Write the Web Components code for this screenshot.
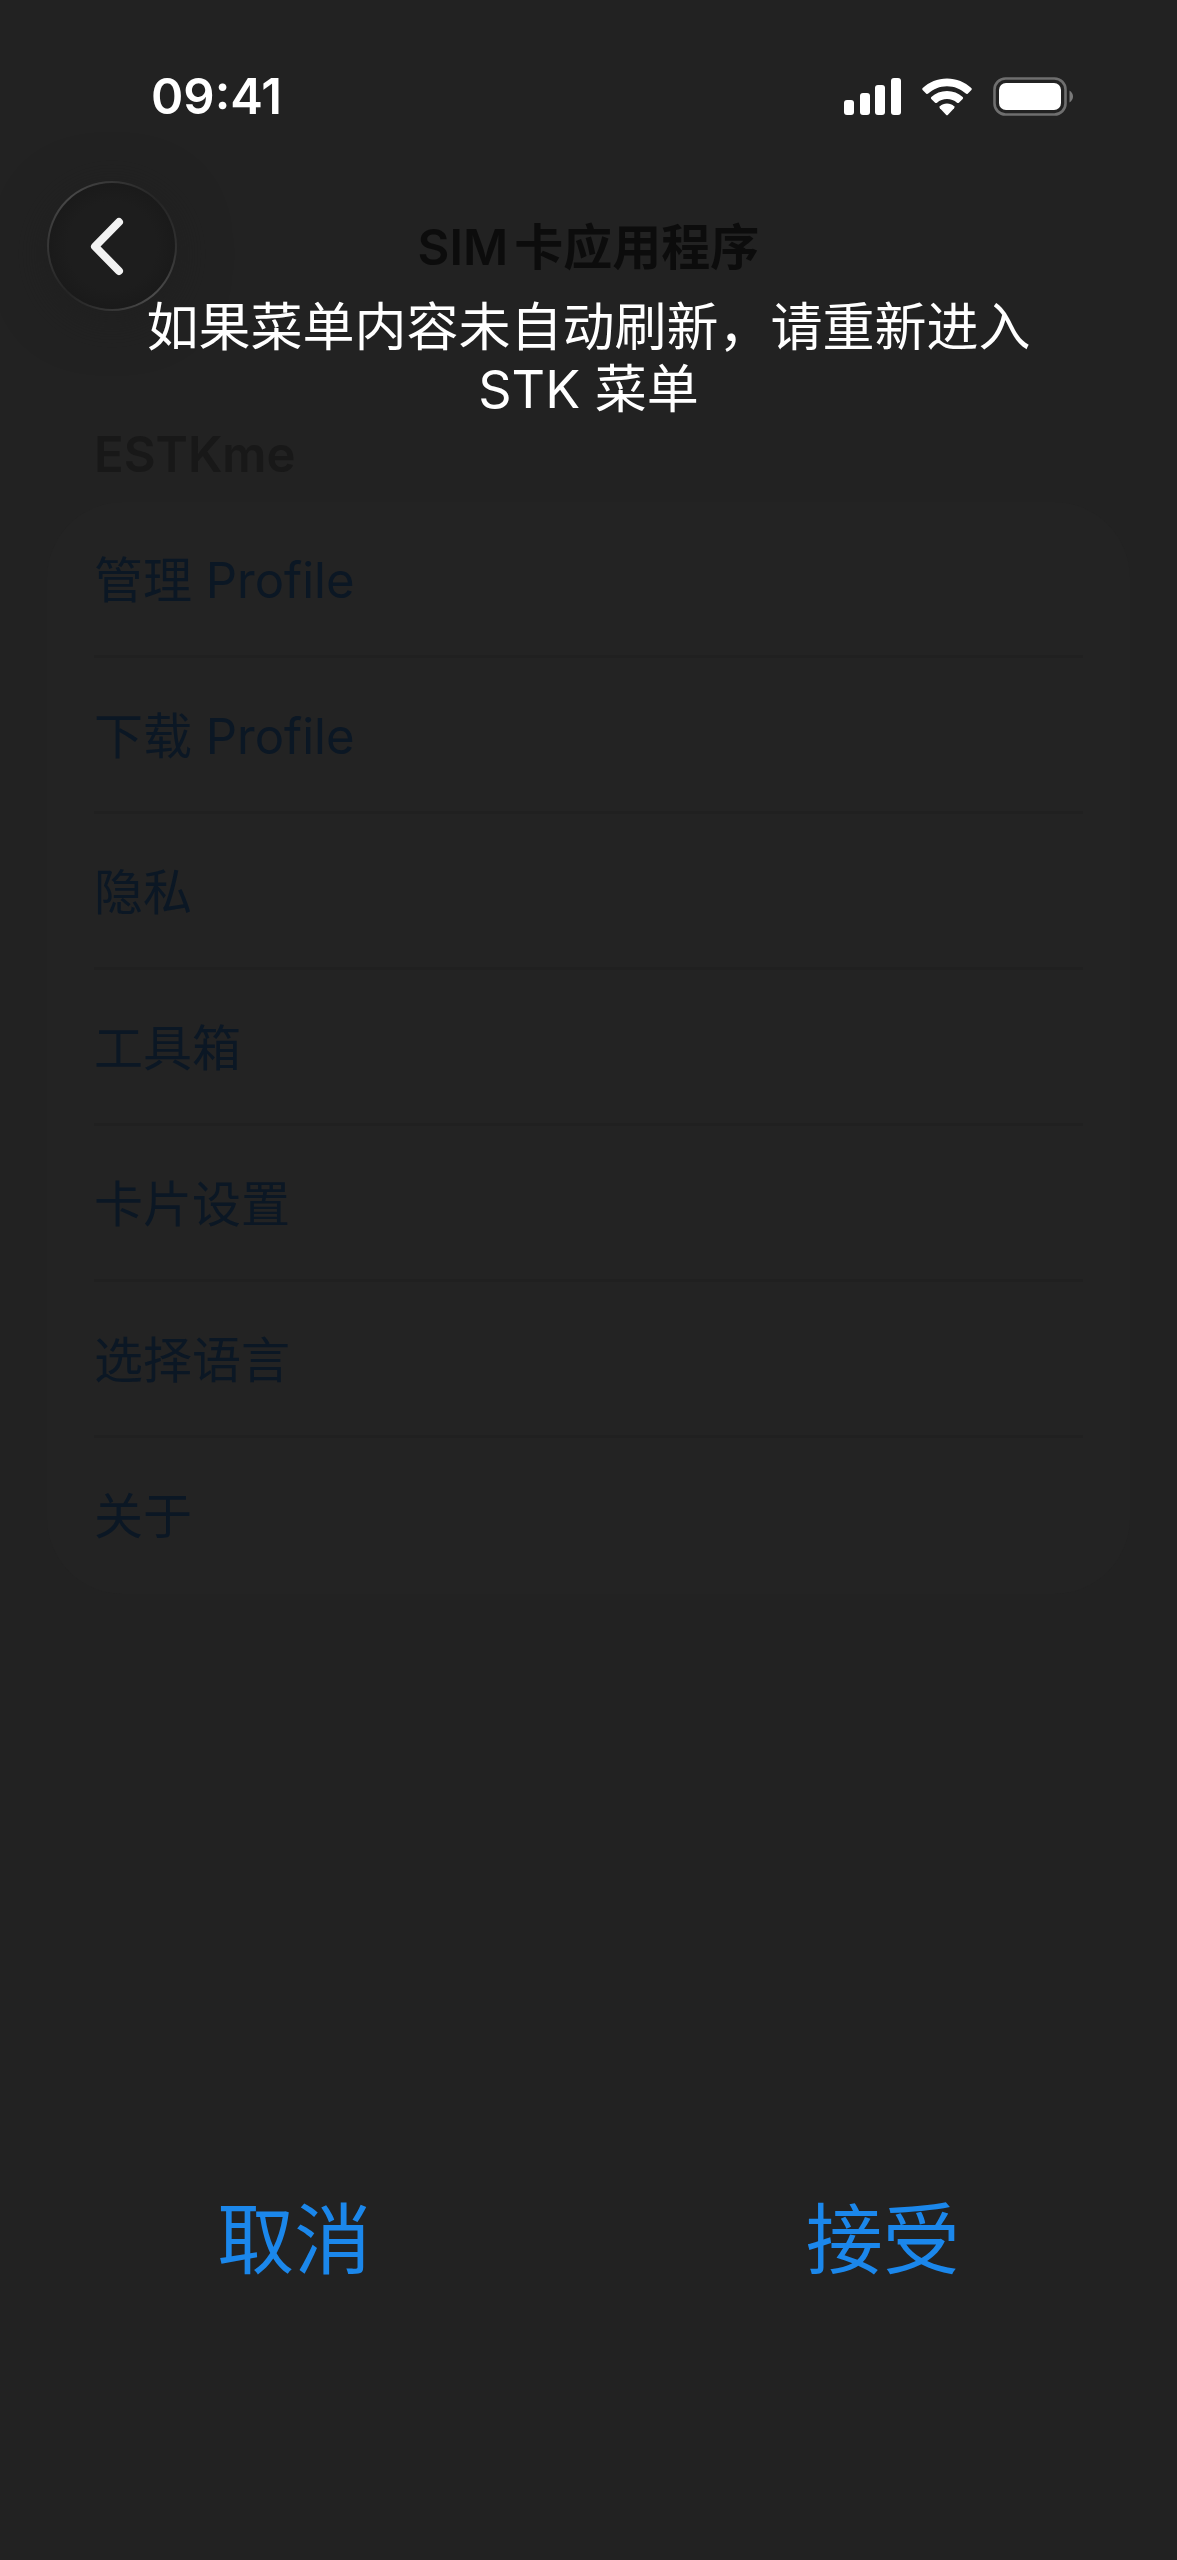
<!DOCTYPE html>
<html lang="zh-CN">
<head>
<meta charset="utf-8">
<meta name="viewport" content="width=device-width, initial-scale=1">
<title>SIM卡应用程序</title>
<style>
  html, body { margin: 0; min-height: 100%; background: #222; }
  body {
    font-family: Inter, "Noto Sans CJK SC", sans-serif;
    font-size: 49px;
    line-height: 60px;
    color: #fff;
  }
</style>
</head>
<body>
<stk-screen>
  <status-bar slot="status" time="09:41"></status-bar>
  <nav-bar slot="nav">SIM卡应用程序</nav-bar>
  <stk-menu slot="menu" heading="ESTKme">
    <stk-item>管理 Profile</stk-item>
    <stk-item>下载 Profile</stk-item>
    <stk-item>隐私</stk-item>
    <stk-item>工具箱</stk-item>
    <stk-item>卡片设置</stk-item>
    <stk-item>选择语言</stk-item>
    <stk-item>关于</stk-item>
  </stk-menu>
  <stk-prompt slot="prompt" cancel="取消" accept="接受">如果菜单内容未自动刷新，请重新进入 STK 菜单</stk-prompt>
</stk-screen>

<script>
class StkScreenElement extends HTMLElement {
  constructor() {
    super()
    this.attachShadow({mode: 'open'}).innerHTML = `
      <style>
      :host { display: grid; min-height: 100vh; }
      /* the prompt covers the page, so both share one cell */
      #page, slot[name="prompt"]::slotted(*) { grid-area: 1 / 1; }
      #page { display: flex; flex-direction: column; }
      </style>
      <div id="page">
        <slot name="status"></slot>
        <slot name="nav"></slot>
        <slot name="menu"></slot>
      </div>
      <slot name="prompt"></slot>
    `
  }
}

class StatusBarElement extends HTMLElement {
  connectedCallback() {
    if (this.shadowRoot) return
    this.attachShadow({mode: 'open'}).innerHTML = `
      <style>
      :host {
        display: flex;
        align-items: center;
        justify-content: space-between;
        padding: 67px 103px 54px 151px;
        font-weight: 600;
      }
      #icons { display: flex; align-items: center; gap: 20px; }
      svg { display: block; }
      </style>
      <time>${this.getAttribute('time')}</time>
      <div id="icons">
        <svg width="58" height="40" viewBox="0 0 58 40" fill="#fff" aria-hidden="true">
          <rect x="0" y="23" width="10" height="15" rx="3"/>
          <rect x="16" y="16" width="10" height="22" rx="3"/>
          <rect x="31" y="8" width="10" height="30" rx="3"/>
          <rect x="47" y="1" width="10" height="37" rx="3"/>
        </svg>
        <svg width="50" height="40" viewBox="0 0 50 40" fill="#fff" aria-hidden="true">
          <path d="M25 1.400C34.500 1.400 43 5 49.300 11Q50.200 12 49.400 13L45.700 16.700Q44.800 17.500 43.800 16.600C38.700 12 32.200 9.300 25 9.300S11.300 12 6.200 16.600Q5.200 17.500 4.300 16.700L.6 13Q-.2 12 .7 11C7 5 15.500 1.400 25 1.400Z"/>
          <path d="M25 14C31 14 36.500 16.200 40.700 20Q41.600 21 40.700 22L36.900 25.700Q36 26.500 35 25.700C32.200 23.300 28.800 22 25 22S17.800 23.300 15 25.700Q14 26.500 13.100 25.700L9.300 22Q8.400 21 9.300 20C13.500 16.200 19 14 25 14Z"/>
          <path d="M25 26.500C27.700 26.500 30.200 27.500 32.100 29.200Q33 30.200 32.100 31.200L26 37.800Q25 38.800 24 37.800L17.900 31.200Q17 30.200 17.900 29.200C19.800 27.500 22.300 26.500 25 26.500Z"/>
        </svg>
        <svg width="82" height="40" viewBox="0 0 82 40" aria-hidden="true">
          <rect x="2.500" y="1.500" width="71" height="36" rx="11" fill="none" stroke="#6f6f6f" stroke-width="2.600"/>
          <rect x="7" y="6" width="62" height="27" rx="7" fill="#fff"/>
          <path d="M77.500 13.500Q81 16 81 19.500T77.500 25.500Z" fill="#7a7a7a"/>
        </svg>
      </div>
    `
  }
}

class NavBarElement extends HTMLElement {
  constructor() {
    super()
    this.attachShadow({mode: 'open'}).innerHTML = `
      <style>
      :host {
        display: grid;
        grid-template-columns: 1fr auto 1fr;
        align-items: center;
        padding: 0 47px;
      }
      h1 {
        margin: 0;
        padding-top: 4px;
        font: inherit;
        font-weight: 600;
        text-autospace: normal;
        color: #0c0c0c;
      }
      button {
        width: 130px;
        height: 130px;
        padding: 0;
        box-sizing: border-box;
        border: 2px solid transparent;
        border-radius: 50%;
        background:
          radial-gradient(circle, #1d1d1d 50%, #1a1a1a 70%) padding-box,
          conic-gradient(#363636, #262626 45deg, #303030 90deg, #4c4c4c 140deg, #363636 180deg, #252525 225deg, #363636 270deg, #484848 320deg, #363636) border-box;
        box-shadow: 0 8px 50px #1f1f1f;
      }
      svg { display: block; }
      </style>
      <button type="button" aria-label="返回">
        <svg width="126" height="126" viewBox="0 0 126 126" fill="none" stroke="#f2f2f2" stroke-width="8" stroke-linecap="round" stroke-linejoin="round" aria-hidden="true">
          <path d="M70 39L46 63.500L70 88"/>
        </svg>
      </button>
      <h1><slot></slot></h1>
    `
  }
}

class StkMenuElement extends HTMLElement {
  connectedCallback() {
    if (this.shadowRoot) return
    this.attachShadow({mode: 'open'}).innerHTML = `
      <style>
      :host { display: block; padding: 114px 47px 0; }
      h2 { margin: 0 0 17px; padding: 0 47px; font: inherit; font-weight: 600; color: #181818; }
      #card { padding: 0 47px; border-radius: 76px; background: #232323; }
      </style>
      <h2>${this.getAttribute('heading')}</h2>
      <div id="card"><slot></slot></div>
    `
  }
}

class StkItemElement extends HTMLElement {
  constructor() {
    super()
    this.attachShadow({mode: 'open'}).innerHTML = `
      <style>
      :host { display: block; border-bottom: 3px solid #202020; }
      :host(:last-child) { border-bottom-color: transparent; }
      button {
        display: block;
        width: 100%;
        height: 153px;
        padding: 4px 0 0;
        border: 0;
        background: none;
        font: inherit;
        text-align: left;
        color: #0b1724;
      }
      </style>
      <button type="button"><slot></slot></button>
    `
  }
}

class StkPromptElement extends HTMLElement {
  connectedCallback() {
    if (this.shadowRoot) return
    this.attachShadow({mode: 'open'}).innerHTML = `
      <style>
      :host {
        display: flex;
        flex-direction: column;
        justify-content: space-between;
        padding: 297px 0 260px;
        pointer-events: none;
      }
      p { margin: 0; padding: 0 120px; font-size: 52px; line-height: 62px; text-align: center; }
      #actions { display: grid; grid-template-columns: 1fr 1fr; justify-items: center; }
      button {
        padding: 0 40px;
        border: 0;
        background: none;
        font: inherit;
        font-size: 77px;
        line-height: 120px;
        color: #1b87eb;
        pointer-events: auto;
      }
      </style>
      <p><slot></slot></p>
      <div id="actions">
        <button type="button">${this.getAttribute('cancel')}</button>
        <button type="button">${this.getAttribute('accept')}</button>
      </div>
    `
  }
}

customElements.define('stk-screen', StkScreenElement)
customElements.define('status-bar', StatusBarElement)
customElements.define('nav-bar', NavBarElement)
customElements.define('stk-menu', StkMenuElement)
customElements.define('stk-item', StkItemElement)
customElements.define('stk-prompt', StkPromptElement)
</script>
</body>
</html>
